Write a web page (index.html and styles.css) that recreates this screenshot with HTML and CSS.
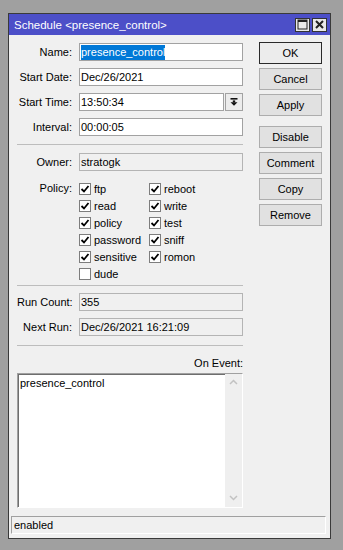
FILE: index.html
```html
<!DOCTYPE html>
<html lang="en">
<head>
    <meta charset="UTF-8">
    <title>Schedule &lt;presence_control&gt;</title>
    <link rel="stylesheet" href="styles.css">
</head>
<body>
    <div class="window">
        <div class="titlebar">
            <span class="title">Schedule &lt;presence_control&gt;</span>
            <div class="tb-btn">
                <svg width="11" height="11" viewBox="0 0 11 11"><rect x="1" y="1" width="9" height="9" fill="none" stroke="#222" stroke-width="1"/><rect x="1" y="1" width="9" height="2" fill="#222"/></svg>
            </div>
            <div class="tb-btn last">
                <svg width="9" height="9" viewBox="0 0 9 9"><path d="M1 1 L8 8 M8 1 L1 8" stroke="#222" stroke-width="2"/></svg>
            </div>
        </div>

        <div class="client">
            <div class="main">
                <div class="fields">
                    <div class="group">
                        <div class="row">
                            <span class="label">Name:</span>
                            <div class="input"><span class="sel">presence_control</span></div>
                        </div>
                        <div class="row">
                            <span class="label">Start Date:</span>
                            <div class="input">Dec/26/2021</div>
                        </div>
                        <div class="row">
                            <span class="label">Start Time:</span>
                            <div class="input short">13:50:34</div>
                            <div class="drop">
                                <svg width="8" height="8" viewBox="0 0 8 8"><rect x="0.5" y="0" width="7" height="1.6" fill="#111"/><rect x="2.8" y="2.4" width="2.4" height="2" fill="#111"/><path d="M0.5 4.2 L7.5 4.2 L4 7.8 Z" fill="#111"/></svg>
                            </div>
                        </div>
                        <div class="row">
                            <span class="label">Interval:</span>
                            <div class="input">00:00:05</div>
                        </div>
                    </div>

                    <div class="sep sep-first"></div>

                    <div class="row">
                        <span class="label">Owner:</span>
                        <div class="input readonly">stratogk</div>
                    </div>

                    <div class="policy">
                        <span class="label">Policy:</span>
                        <div class="checks">
                            <div class="check"><span class="box on"><svg width="10" height="10" viewBox="0 0 10 10"><path d="M1.5 5 L4 7.5 L8.5 2" fill="none" stroke="#000" stroke-width="1.8"/></svg></span>ftp</div>
                            <div class="check"><span class="box on"><svg width="10" height="10" viewBox="0 0 10 10"><path d="M1.5 5 L4 7.5 L8.5 2" fill="none" stroke="#000" stroke-width="1.8"/></svg></span>reboot</div>
                            <div class="check"><span class="box on"><svg width="10" height="10" viewBox="0 0 10 10"><path d="M1.5 5 L4 7.5 L8.5 2" fill="none" stroke="#000" stroke-width="1.8"/></svg></span>read</div>
                            <div class="check"><span class="box on"><svg width="10" height="10" viewBox="0 0 10 10"><path d="M1.5 5 L4 7.5 L8.5 2" fill="none" stroke="#000" stroke-width="1.8"/></svg></span>write</div>
                            <div class="check"><span class="box on"><svg width="10" height="10" viewBox="0 0 10 10"><path d="M1.5 5 L4 7.5 L8.5 2" fill="none" stroke="#000" stroke-width="1.8"/></svg></span>policy</div>
                            <div class="check"><span class="box on"><svg width="10" height="10" viewBox="0 0 10 10"><path d="M1.5 5 L4 7.5 L8.5 2" fill="none" stroke="#000" stroke-width="1.8"/></svg></span>test</div>
                            <div class="check"><span class="box on"><svg width="10" height="10" viewBox="0 0 10 10"><path d="M1.5 5 L4 7.5 L8.5 2" fill="none" stroke="#000" stroke-width="1.8"/></svg></span>password</div>
                            <div class="check"><span class="box on"><svg width="10" height="10" viewBox="0 0 10 10"><path d="M1.5 5 L4 7.5 L8.5 2" fill="none" stroke="#000" stroke-width="1.8"/></svg></span>sniff</div>
                            <div class="check"><span class="box on"><svg width="10" height="10" viewBox="0 0 10 10"><path d="M1.5 5 L4 7.5 L8.5 2" fill="none" stroke="#000" stroke-width="1.8"/></svg></span>sensitive</div>
                            <div class="check"><span class="box on"><svg width="10" height="10" viewBox="0 0 10 10"><path d="M1.5 5 L4 7.5 L8.5 2" fill="none" stroke="#000" stroke-width="1.8"/></svg></span>romon</div>
                            <div class="check"><span class="box"></span>dude</div>
                        </div>
                    </div>

                    <div class="sep sep-second"></div>

                    <div class="group">
                        <div class="row">
                            <span class="label">Run Count:</span>
                            <div class="input readonly">355</div>
                        </div>
                        <div class="row">
                            <span class="label">Next Run:</span>
                            <div class="input readonly">Dec/26/2021 16:21:09</div>
                        </div>
                    </div>

                    <div class="sep sep-third"></div>

                    <div class="event-label">On Event:</div>
                    <div class="memo">
                        <div class="memo-text">presence_control</div>
                        <div class="scroll">
                            <svg width="9" height="6" viewBox="0 0 9 6"><path d="M1 5 L4.5 1.5 L8 5" fill="none" stroke="#c2c2c2" stroke-width="1.5"/></svg>
                            <svg width="9" height="6" viewBox="0 0 9 6"><path d="M1 1 L4.5 4.5 L8 1" fill="none" stroke="#c2c2c2" stroke-width="1.5"/></svg>
                        </div>
                    </div>
                </div>

                <div class="side">
                    <div class="btn btn-default">OK</div>
                    <div class="btn">Cancel</div>
                    <div class="btn">Apply</div>
                    <div class="btn btn-gap">Disable</div>
                    <div class="btn">Comment</div>
                    <div class="btn">Copy</div>
                    <div class="btn">Remove</div>
                </div>
            </div>

            <div class="statusbar">enabled</div>
        </div>
    </div>
</body>
</html>
```

FILE: styles.css
```css
* {
    margin: 0;
    padding: 0;
    box-sizing: border-box;
}

body {
    font-family: 'Liberation Sans', Arial, sans-serif;
    font-size: 11px;
    color: #000;
    background: #a0a0a0;
    padding: 13px 0 0 8px;
}

.window {
    width: 323px;
    height: 526px;
    border: 1px solid #3a3a3a;
    background: #f0f0f0;
    display: flex;
    flex-direction: column;
}

.titlebar {
    height: 21px;
    background: #4c4fc8;
    color: #fff;
    display: flex;
    align-items: center;
    padding-left: 5px;
}

.title {
    flex: 1;
    font-size: 11.5px;
}

.tb-btn {
    width: 15px;
    height: 14px;
    background: #e9e9e9;
    border: 1px solid #333;
    margin-right: 2px;
    display: flex;
    align-items: center;
    justify-content: center;
}

.tb-btn.last {
    margin-right: 3px;
}

.client {
    flex: 1;
    display: flex;
    flex-direction: column;
    padding-bottom: 4px;
}

.main {
    display: flex;
    gap: 16px;
    padding: 7px 8px 0 8px;
}

.fields {
    width: 226px;
    padding-top: 1px;
    display: flex;
    flex-direction: column;
}

.group {
    display: flex;
    flex-direction: column;
    gap: 7px;
}

.row {
    display: flex;
    align-items: center;
    height: 18px;
}

.label {
    width: 55px;
    margin-right: 7px;
    text-align: right;
    flex: none;
    white-space: nowrap;
}

.input {
    width: 164px;
    height: 18px;
    border: 1px solid #a2a2a2;
    background: #fff;
    padding-left: 1px;
    line-height: 16px;
    white-space: nowrap;
    overflow: hidden;
}

.input.short {
    width: 145px;
}

.input.readonly {
    background: #f0f0f0;
    border-color: #b4b4b4;
}

.sel {
    display: inline-block;
    background: #0078d7;
    color: #fff;
    line-height: 15px;
}

.drop {
    width: 18px;
    height: 18px;
    margin-left: 1px;
    border: 1px solid #a2a2a2;
    background: #ececec;
    display: flex;
    align-items: center;
    justify-content: center;
}

.sep {
    height: 1px;
    background: #bdbdbd;
}

.sep-first {
    margin: 8px 0;
}

.sep-second {
    margin: 3px 0 7px;
}

.sep-third {
    margin: 9px 0 10px;
}

.policy {
    display: flex;
    margin-top: 9px;
}

.policy .label {
    line-height: 17px;
}

.checks {
    display: grid;
    grid-template-columns: 70px 1fr;
    grid-auto-rows: 17px;
}

.check {
    display: flex;
    align-items: center;
    gap: 3px;
}

.box {
    width: 12px;
    height: 12px;
    border: 1px solid #7d7d7d;
    background: #fff;
    display: flex;
    align-items: center;
    justify-content: center;
}

.event-label {
    height: 14px;
    line-height: 14px;
    text-align: right;
    margin-bottom: 3px;
}

.memo {
    height: 135px;
    display: flex;
    background: #fff;
    border: 1px solid;
    border-color: #a0a0a0 #fff #fff #a0a0a0;
    box-shadow: inset 1px 1px 0 #6e6e6e;
}

.memo-text {
    flex: 1;
    padding: 2px 0 0 2px;
    line-height: 14px;
}

.scroll {
    width: 17px;
    background: #efefef;
    display: flex;
    flex-direction: column;
    justify-content: space-between;
    align-items: center;
    padding: 5px 0 6px;
}

.side {
    width: 63px;
    display: flex;
    flex-direction: column;
    gap: 4px;
}

.btn {
    height: 22px;
    line-height: 20px;
    text-align: center;
    background: #e1e1e1;
    border: 1px solid #adadad;
}

.btn-default {
    border-color: #2a2a2a;
    background: #ececec;
}

.btn-gap {
    margin-top: 6px;
}

.statusbar {
    margin: 8px 4px 0 2px;
    height: 18px;
    border: 1px solid;
    border-color: #a0a0a0 #fff #fff #a0a0a0;
    padding-left: 2px;
    line-height: 16px;
}
```
